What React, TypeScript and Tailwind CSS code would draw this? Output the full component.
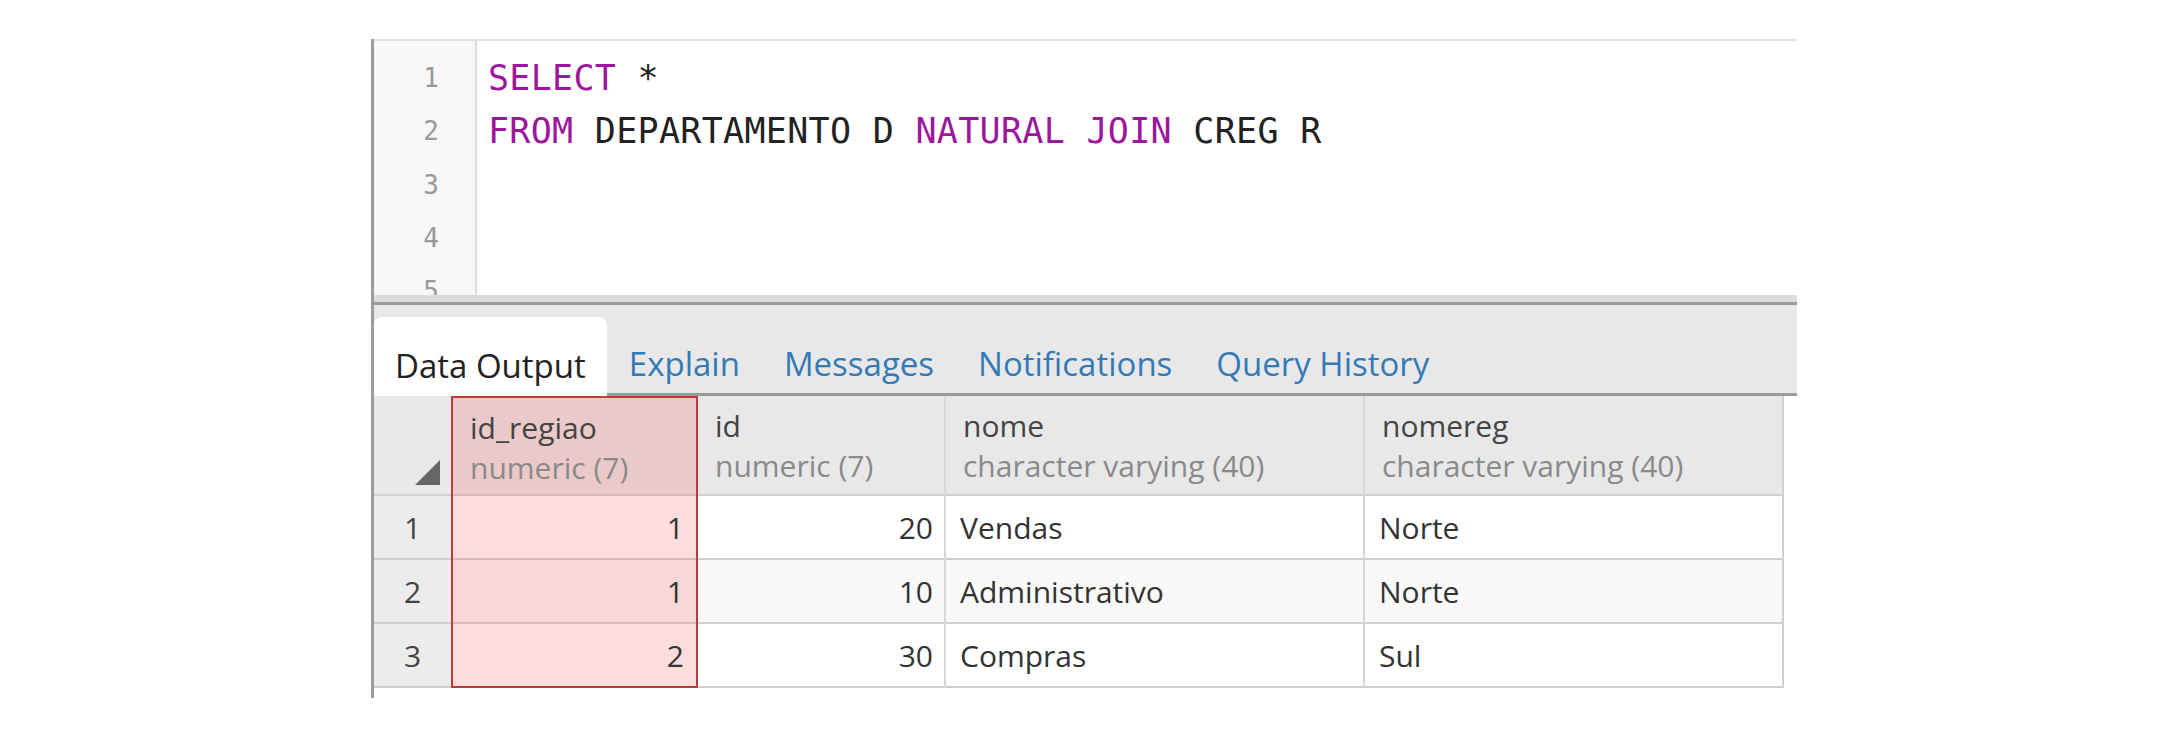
import { Fragment } from 'react';

const mono = { fontFamily: '"DejaVu Sans Mono", "Liberation Mono", monospace' };
const sans = { fontFamily: '"Open Sans", "Noto Sans", sans-serif' };

const codeLines: { text: string; kw: boolean }[][] = [
  [
    { text: 'SELECT', kw: true },
    { text: ' *', kw: false },
  ],
  [
    { text: 'FROM', kw: true },
    { text: ' DEPARTAMENTO D ', kw: false },
    { text: 'NATURAL JOIN', kw: true },
    { text: ' CREG R', kw: false },
  ],
  [],
  [],
  [],
];

const tabs = ['Data Output', 'Explain', 'Messages', 'Notifications', 'Query History'];

const rows = [
  { id_regiao: 1, id: 20, nome: 'Vendas', nomereg: 'Norte' },
  { id_regiao: 1, id: 10, nome: 'Administrativo', nomereg: 'Norte' },
  { id_regiao: 2, id: 30, nome: 'Compras', nomereg: 'Sul' },
];

function HeaderText({ name, type }: { name: string; type: string }) {
  return (
    <div className="pl-[17px] pt-[10px] text-[30px] leading-[40px]">
      <div className="text-[#444]">{name}</div>
      <div className="text-[#8a8a8a]">{type}</div>
    </div>
  );
}

export default function App() {
  return (
    <div className="h-[739px] w-[2168px] bg-white pl-[371px] pt-[39px]" style={sans}>
      <div className="flex h-[659px] w-[1426px] flex-col border-l-[3px] border-[#9c9c9c]">
        {/* editor */}
        <div className="flex h-[256px] overflow-hidden border-t-2 border-[#e2e2e2] bg-white">
          <div className="w-[103px] shrink-0 border-r-2 border-[#dedede] bg-[#f7f7f7] pt-[11px] pr-[36px] text-right text-[26px] leading-[53.3px] text-[#999]" style={mono}>
            {codeLines.map((_, i) => (
              <div key={i}>{i + 1}</div>
            ))}
          </div>
          <div className="pl-[11px] pt-[11px] text-[35px] leading-[53.3px] tracking-[0.3px] text-[#222]" style={mono}>
            {codeLines.map((line, i) => (
              <div key={i} className="h-[53.3px] whitespace-pre">
                {line.map((part, j) => (
                  <Fragment key={j}>
                    {part.kw ? <span className="text-[#9d169d]">{part.text}</span> : part.text}
                  </Fragment>
                ))}
              </div>
            ))}
          </div>
        </div>

        {/* splitter */}
        <div className="h-[10px] border-b-[3px] border-[#9a9a9a] bg-[#dcdcdc]" />

        {/* tabs */}
        <div className="flex h-[91px] items-end border-b-[3px] border-[#9a9a9a] bg-[#e8e8e8]">
          {tabs.map((tab, i) =>
            i === 0 ? (
              <div key={tab} className="-mb-[3px] h-[79px] rounded-t-[8px] bg-white px-[21px] pt-[26px] text-[33px] leading-[45px] text-[#222]">
                {tab}
              </div>
            ) : (
              <div key={tab} className="h-[79px] px-[22px] pt-[27px] text-[33px] leading-[45px] text-[#337ab7]">
                {tab}
              </div>
            )
          )}
        </div>

        {/* data grid */}
        <div className="flex text-[30px] text-[#333]">
          <div className="w-[77px]">
            <div className="flex h-[100px] items-end justify-end border-b-2 border-[#d2d2d2] bg-[#e9e9e9] pb-[9px] pr-[11px]">
              <svg width="25" height="25" viewBox="0 0 25 25">
                <polygon points="25,0 25,25 0,25" fill="#666" />
              </svg>
            </div>
            {rows.map((_, i) => (
              <div key={i} className="flex h-[64px] items-center justify-center border-b-2 border-[#cfcfcf] bg-[#ececec] text-[#444]">
                {i + 1}
              </div>
            ))}
          </div>

          <div className="w-[247px] border-2 border-[#c0393b]">
            <div className="h-[98px] border-b-2 border-[#d9b9b9] bg-[#ebc9c9]">
              <HeaderText name="id_regiao" type="numeric (7)" />
            </div>
            {rows.map((r, i) => (
              <div
                key={i}
                className={
                  i === rows.length - 1
                    ? 'flex h-[62px] items-center justify-end bg-[#fddcdc] pr-[12px]'
                    : i % 2 === 1
                    ? 'flex h-[64px] items-center justify-end border-b-2 border-[#dcbaba] bg-[#f8d7d7] pr-[12px]'
                    : 'flex h-[64px] items-center justify-end border-b-2 border-[#dcbaba] bg-[#fddcdc] pr-[12px]'
                }
              >
                {r.id_regiao}
              </div>
            ))}
          </div>

          <div className="w-[248px] border-r-2 border-[#d8d8d8]">
            <div className="h-[100px] border-b-2 border-[#d2d2d2] bg-[#e8e8e8]">
              <HeaderText name="id" type="numeric (7)" />
            </div>
            {rows.map((r, i) => (
              <div key={i} className={i % 2 === 1 ? 'flex h-[64px] items-center justify-end border-b-2 border-[#cfcfcf] bg-[#f9f9f9] pr-[11px]' : 'flex h-[64px] items-center justify-end border-b-2 border-[#cfcfcf] bg-white pr-[11px]'}>
                {r.id}
              </div>
            ))}
          </div>

          <div className="w-[419px] border-r-2 border-[#d8d8d8]">
            <div className="h-[100px] border-b-2 border-[#d2d2d2] bg-[#e8e8e8]">
              <HeaderText name="nome" type="character varying (40)" />
            </div>
            {rows.map((r, i) => (
              <div key={i} className={i % 2 === 1 ? 'flex h-[64px] items-center border-b-2 border-[#cfcfcf] bg-[#f9f9f9] pl-[14px]' : 'flex h-[64px] items-center border-b-2 border-[#cfcfcf] bg-white pl-[14px]'}>
                {r.nome}
              </div>
            ))}
          </div>

          <div className="w-[419px] border-r-2 border-[#d0d0d0]">
            <div className="h-[100px] border-b-2 border-[#d2d2d2] bg-[#e8e8e8]">
              <HeaderText name="nomereg" type="character varying (40)" />
            </div>
            {rows.map((r, i) => (
              <div key={i} className={i % 2 === 1 ? 'flex h-[64px] items-center border-b-2 border-[#cfcfcf] bg-[#f9f9f9] pl-[14px]' : 'flex h-[64px] items-center border-b-2 border-[#cfcfcf] bg-white pl-[14px]'}>
                {r.nomereg}
              </div>
            ))}
          </div>
        </div>
      </div>
    </div>
  );
}
